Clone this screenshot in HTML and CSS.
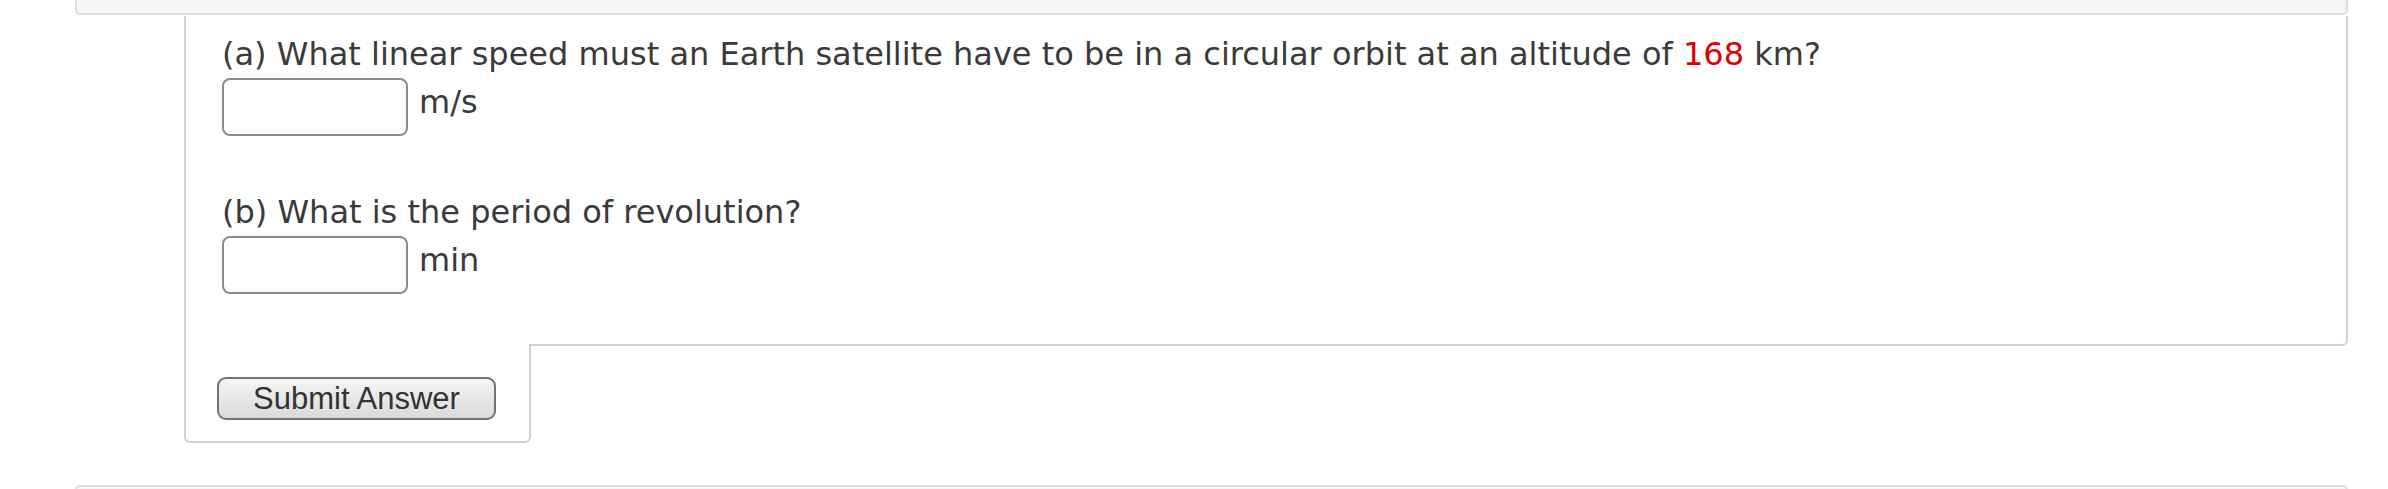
FILE: index.html
```html
<!DOCTYPE html>
<html>
<head>
<meta charset="utf-8">
<link rel="stylesheet" href="styles.css">
</head>
<body>
<div class="page">
  <div class="prev-box"></div>
  <div class="question-wrap">
    <div class="question">
      <p class="prompt">(a) What linear speed must an Earth satellite have to be in a circular orbit at an altitude of <span class="num">168</span> km?</p>
      <div class="answer-row">
        <input class="answer" type="text">
        <span class="unit">m/s</span>
      </div>
      <p class="prompt prompt-b">(b) What is the period of revolution?</p>
      <div class="answer-row">
        <input class="answer" type="text">
        <span class="unit">min</span>
      </div>
    </div>
    <div class="submit-area">
      <button class="submit" type="button">Submit Answer</button>
    </div>
  </div>
  <div class="next-box"></div>
</div>
</body>
</html>
```
FILE: styles.css
```css
html, body {
  margin: 0;
  padding: 0;
  background: #ffffff;
}
.page {
  padding-left: 75px;
  width: 2273px;
  font-family: "DejaVu Sans", Verdana, sans-serif;
  color: #3a3a3a;
}
.prev-box {
  height: 13px;
  background: #f6f6f6;
  border: 2px solid #dddddd;
  border-top: none;
  border-radius: 0 0 5px 5px;
}
.question-wrap {
  margin-left: 109px;
  padding-top: 1px;
}
.question {
  border-left: 2px solid #d0d0d0;
  border-right: 2px solid #d0d0d0;
  border-bottom: 2px solid #d0d0d0;
  border-radius: 0 0 6px 0;
  padding: 19px 36px 50px 36px;
}
.prompt {
  margin: 0;
  font-size: 32px;
  line-height: 38px;
}
.prompt-b {
  margin-top: 57px;
}
.num {
  color: #dd0000;
}
.answer-row {
  display: flex;
  align-items: flex-start;
  margin-top: 5px;
}
.answer {
  box-sizing: border-box;
  width: 186px;
  height: 58px;
  margin: 0;
  border: 2px solid #8c8c8c;
  border-radius: 8px;
  background: #ffffff;
  padding: 0 8px;
}
.unit {
  font-size: 32px;
  line-height: 38px;
  padding-top: 5px;
  margin-left: 11px;
}
.submit-area {
  position: relative;
  box-sizing: border-box;
  margin-top: -2px;
  width: 347px;
  border-left: 2px solid #d0d0d0;
  border-right: 2px solid #d0d0d0;
  border-bottom: 2px solid #d0d0d0;
  border-radius: 0 0 6px 6px;
  background: #ffffff;
  padding: 33px 0 21px 31px;
}
.submit {
  display: block;
  box-sizing: border-box;
  width: 279px;
  height: 43px;
  margin: 0;
  padding: 0;
  border: 2px solid #727272;
  border-radius: 9px;
  background: linear-gradient(#f5f5f5, #dadada);
  font-family: "Liberation Sans", Arial, sans-serif;
  font-size: 31px;
  line-height: 39px;
  color: #333333;
}
.next-box {
  margin-top: 42px;
  height: 20px;
  background: #f6f6f6;
  border: 2px solid #dddddd;
  border-bottom: none;
  border-radius: 5px 5px 0 0;
}
```
